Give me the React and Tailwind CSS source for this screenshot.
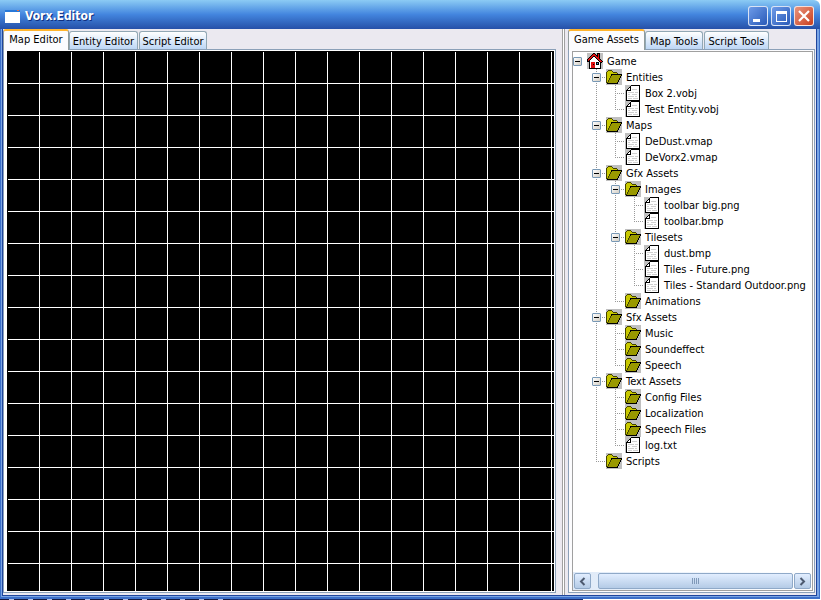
import React, { useState } from 'react';

const editorTabs = [
  { name: 'Map Editor', width: 'w-[66px]' },
  { name: 'Entity Editor', width: 'w-[69px]' },
  { name: 'Script Editor', width: 'w-[68px]' },
];

const toolTabs = [
  { name: 'Game Assets', width: 'w-[77px]' },
  { name: 'Map Tools', width: 'w-[58px]' },
  { name: 'Script Tools', width: 'w-[65px]' },
];

const file = (name) => ({ name, type: 'file' });
const folder = (name, children = []) => ({ name, type: 'folder', children });

const assets = {
  name: 'Game',
  type: 'home',
  children: [
    folder('Entities', [file('Box 2.vobj'), file('Test Entity.vobj')]),
    folder('Maps', [file('DeDust.vmap'), file('DeVorx2.vmap')]),
    folder('Gfx Assets', [
      folder('Images', [file('toolbar big.png'), file('toolbar.bmp')]),
      folder('Tilesets', [
        file('dust.bmp'),
        file('Tiles - Future.png'),
        file('Tiles - Standard Outdoor.png'),
      ]),
      folder('Animations'),
    ]),
    folder('Sfx Assets', [folder('Music'), folder('Soundeffect'), folder('Speech')]),
    folder('Text Assets', [
      folder('Config Files'),
      folder('Localization'),
      folder('Speech Files'),
      file('log.txt'),
    ]),
    folder('Scripts'),
  ],
};

const palette = {
  K: '#000000',
  R: '#e01010',
  W: '#ffffff',
  B: '#30b0e8',
  Y: '#c8c800',
  O: '#999900',
  D: '#444400',
};

const homePixels = [
  '......KK..KKK...',
  '.....KRRK.KRK...',
  '....KRRRRKKRK...',
  '...KRRKKRRKRK...',
  '..KRRKWWKRRRK...',
  '.KRRKWWWWKRRK...',
  'KRRKWWWWWWKRRK..',
  'KRKWWWWWWWWKRRK.',
  'KKKWWWWWWWWWKRRK',
  '..KWRRRRWKKKWKK.',
  '..KWRRRRWKBKWK..',
  '..KWRRKRWKKKWK..',
  '..KWRRRRWWWWWK..',
  '..KWRRRRWWWWWK..',
  '..KWRRRRWWWWWK..',
  '..KKKKKKKKKKKK..',
];

const folderPixels = [
  '................',
  '..DDDD..........',
  '.DYYYYD.........',
  'DYYYYYYDDDD.....',
  'DYYYYYYYYYYD....',
  'DYYYYKKKKKKKKKKK',
  'DYYYYKOOOOOOOOOK',
  'DYYYDOOOOOOOOOK.',
  'DYYYDOOOOOOOOOK.',
  'DYYDOOOOOOOOOK..',
  'DYYDOOOOOOOOOK..',
  'DYDOOOOOOOOOK...',
  'DYDOOOOOOOOOK...',
  'DDOOOOOOOOOK....',
  '.KKKKKKKKKKK....',
  '................',
];

const PixelIcon = ({ rows }) => (
  <svg width="16" height="16" viewBox="0 0 16 16" shapeRendering="crispEdges" className="shrink-0">
    <rect width="16" height="16" fill="#c0c0c0" />
    {rows.map((row, y) =>
      [...row].map(
        (key, x) =>
          key !== '.' && <rect key={`${x}-${y}`} x={x} y={y} width="1" height="1" fill={palette[key]} />
      )
    )}
  </svg>
);

const HomeIcon = () => <PixelIcon rows={homePixels} />;
const FolderIcon = () => <PixelIcon rows={folderPixels} />;

const FileIcon = () => (
  <svg width="16" height="16" viewBox="0 0 16 16" shapeRendering="crispEdges" className="shrink-0">
    <path d="M0 0h6v16H0z" fill="#c0c0c0" />
    <path d="M1.5 5.5l5-5h8v15h-13z" fill="#fff" stroke="#000" />
    <path d="M5.5 1.5v4h-4" fill="none" stroke="#000" />
    <path d="M7 4.5h5M3 7.5h6M10 7.5h3M3 9.5h2M7 9.5h5M3 11.5h6M10 11.5h2M3 13.5h4M8 13.5h5" stroke="#d0d0d0" />
  </svg>
);

const icons = { home: HomeIcon, folder: FolderIcon, file: FileIcon };

// One 19px column of the dotted tree guides
const Guide = ({ up, down, across }) => (
  <svg width="19" height="16" viewBox="0 0 19 16" shapeRendering="crispEdges" className="shrink-0">
    <g stroke="#999" strokeDasharray="1 1">
      {up && <path d="M9.5 0v8" />}
      {down && <path d="M9.5 8v8" />}
      {across && <path d="M9 8.5h10" />}
    </g>
  </svg>
);

const Toggle = ({ open, name, onClick }) => (
  <button
    type="button"
    aria-label={`${open ? 'Collapse' : 'Expand'} ${name}`}
    onClick={onClick}
    className="flex h-[9px] w-[9px] shrink-0 items-center justify-center rounded-[1px] border border-[#7898b5] bg-linear-to-br from-white to-[#d3cec4]"
  >
    <svg width="5" height="5" viewBox="0 0 5 5" shapeRendering="crispEdges">
      <path d={open ? 'M0 2.5h5' : 'M0 2.5h5M2.5 0v5'} stroke="#000" />
    </svg>
  </button>
);

const TreeNode = ({ node, rails = [], last = true, depth = 0 }) => {
  const [open, setOpen] = useState(true);
  const Icon = icons[node.type];
  const children = node.children || [];
  const hasChildren = children.length > 0;

  return (
    <li>
      <div className="flex h-4 items-center">
        {depth === 0 ? (
          <span className="flex w-[14px] shrink-0">
            <Toggle open={open} name={node.name} onClick={() => setOpen(!open)} />
          </span>
        ) : (
          <>
            <span className="w-[14px] shrink-0" />
            {rails.map((rail, i) => (
              <Guide key={i} up={rail} down={rail} />
            ))}
            <span className="grid shrink-0 items-center *:col-start-1 *:row-start-1">
              <Guide up down={!last} across />
              {hasChildren && (
                <span className="flex w-[19px] justify-center">
                  <Toggle open={open} name={node.name} onClick={() => setOpen(!open)} />
                </span>
              )}
            </span>
          </>
        )}
        <Icon />
        <span className="ml-1 pt-[2px] whitespace-nowrap">{node.name}</span>
      </div>
      {hasChildren && open && (
        <ul>
          {children.map((child, i) => (
            <TreeNode
              key={child.name}
              node={child}
              depth={depth + 1}
              rails={depth === 0 ? [] : [...rails, !last]}
              last={i === children.length - 1}
            />
          ))}
        </ul>
      )}
    </li>
  );
};

const TabBar = ({ tabs, active, onSelect }) => (
  <div role="tablist" className="z-10 flex h-[20px] shrink-0 items-end">
    {tabs.map((tab) => (
      <button
        key={tab.name}
        type="button"
        role="tab"
        aria-selected={tab.name === active}
        onClick={() => onSelect(tab.name)}
        className={`${tab.width} flex shrink-0 items-center justify-center rounded-t-[3px] border-x whitespace-nowrap ${
          tab.name === active
            ? '-mb-px h-[21px] border-t-2 border-x-[#919b9c] border-t-[#ffb42e] bg-[#fcfcfe] pb-[2px]'
            : 'mr-px h-[18px] border-t border-[#91a7b4] bg-linear-to-b from-white to-[#bdd6f5] pt-[2px]'
        }`}
      >
        {tab.name}
      </button>
    ))}
  </div>
);

const captionButton =
  'flex h-[20px] w-[20px] items-center justify-center rounded-[3px] border border-white/80';

const TitleBar = () => (
  <header className="flex h-[29px] shrink-0 items-center rounded-tr-[6px] bg-linear-to-b from-[#8ccbf4] via-[#4385de] to-[#2650a8] pt-[3px] pr-[6px] pl-[5px]">
    <svg width="15" height="13" viewBox="0 0 15 13" shapeRendering="crispEdges">
      <path d="M0 0h15v13H0z" fill="#fff" />
      <path d="M0 0h15v2H0z" fill="#2878d8" />
      <path d="M12 0h2v1h-2z" fill="#e87040" />
    </svg>
    <h1 className="ml-[5px] grow font-['DejaVu_Sans_Condensed','Open_Sans',sans-serif] text-[12px] font-bold text-white [text-shadow:1px_1px_#0f2f80]">
      Vorx.Editor
    </h1>
    <div className="flex gap-[3px]">
      <button type="button" aria-label="Minimize" className={`${captionButton} bg-linear-to-br from-[#6e9be8] to-[#2a5ab8]`}>
        <svg width="18" height="18" viewBox="0 0 18 18" shapeRendering="crispEdges">
          <path d="M4 12h7v3H4z" fill="#fff" />
        </svg>
      </button>
      <button type="button" aria-label="Maximize" className={`${captionButton} bg-linear-to-br from-[#6e9be8] to-[#2a5ab8]`}>
        <svg width="18" height="18" viewBox="0 0 18 18" shapeRendering="crispEdges">
          <path d="M4 4h11v3H4z" fill="#fff" />
          <path d="M4.5 4.5h10v10h-10z" fill="none" stroke="#fff" />
        </svg>
      </button>
      <button type="button" aria-label="Close" className={`${captionButton} bg-linear-to-br from-[#e8937c] to-[#c83c18]`}>
        <svg width="18" height="18" viewBox="0 0 18 18">
          <path d="M4 4l10 10M14 4L4 14" stroke="#fff" strokeWidth="2.2" />
        </svg>
      </button>
    </div>
  </header>
);

const scrollPart =
  'flex h-[16px] items-center justify-center rounded-[2px] border border-[#8fa9c8] bg-linear-to-b from-[#e2eeff] to-[#b4cbe6]';

const ScrollBar = () => (
  <div className="flex h-[18px] shrink-0 items-center bg-linear-to-r from-[#dfeaf8] to-white px-px">
    <button type="button" aria-label="Scroll left" className={`${scrollPart} w-[17px] shrink-0`}>
      <svg width="7" height="9" viewBox="0 0 7 9">
        <path d="M5.5 1L2 4.5 5.5 8" fill="none" stroke="#4d5a70" strokeWidth="2" />
      </svg>
    </button>
    <div className={`${scrollPart} ml-[7px] grow`}>
      <svg width="8" height="6" viewBox="0 0 8 6" shapeRendering="crispEdges">
        <path d="M0.5 0v6M2.5 0v6M4.5 0v6M6.5 0v6" stroke="#8099b8" />
      </svg>
    </div>
    <button type="button" aria-label="Scroll right" className={`${scrollPart} ml-px w-[17px] shrink-0`}>
      <svg width="7" height="9" viewBox="0 0 7 9">
        <path d="M1.5 1L5 4.5 1.5 8" fill="none" stroke="#4d5a70" strokeWidth="2" />
      </svg>
    </button>
  </div>
);

const App = () => {
  const [editor, setEditor] = useState('Map Editor');
  const [tool, setTool] = useState('Game Assets');

  return (
    <div className="flex h-screen flex-col bg-white font-['DejaVu_Sans_Condensed','Noto_Sans',sans-serif] text-[11px] leading-4 text-black">
      <div className="mr-px flex min-h-0 grow flex-col">
        <TitleBar />
        {/* window frame: light outer edge with a dark inner line */}
        <div className="flex min-h-0 grow border-x border-b-2 border-[#3c6fc8]">
          <div className="flex min-h-0 grow border-r-2 border-b border-l border-[#79a4e4]">
            <div className="flex min-h-0 grow border-x border-b border-[#1f459c] bg-[#ebe9f0]">
              <main className="flex min-w-0 grow flex-col pb-[2px]">
                <TabBar tabs={editorTabs} active={editor} onSelect={setEditor} />
                <div className="flex grow border border-[#8ba0b8] bg-white p-px pl-[3px]">
                  <div className="grow bg-black pt-px pl-px">
                    <div className="h-full bg-[linear-gradient(to_right,transparent_31px,white_31px),linear-gradient(to_bottom,transparent_31px,white_31px)] bg-size-[32px_32px]" />
                  </div>
                </div>
              </main>
              <div className="mr-[3px] ml-[6px] w-[3px] shrink-0 border-x border-[#a0a0a0] bg-white" />
              <aside className="mr-px flex w-[247px] shrink-0 flex-col pb-[2px]">
                <TabBar tabs={toolTabs} active={tool} onSelect={setTool} />
                <div className="flex min-h-0 grow flex-col border border-[#8ba0b8] bg-[#fcfcfe] p-px pl-[3px]">
                  <div className="flex min-h-0 grow flex-col border border-[#a0a0a0] bg-white">
                    <ul className="min-h-0 grow overflow-hidden pt-px">
                      <TreeNode node={assets} />
                    </ul>
                    <ScrollBar />
                  </div>
                </div>
              </aside>
            </div>
          </div>
        </div>
      </div>
      {/* sliver of the desktop below the window */}
      <div className="flex h-px shrink-0">
        <div className="w-[230px] bg-[repeating-linear-gradient(to_right,#101840_0_9px,#b8c4e8_9px_14px,#101840_14px_19px)]" />
        <div className="w-[353px] bg-[#182c70]" />
        <div className="grow bg-white" />
      </div>
    </div>
  );
};

export default App;
